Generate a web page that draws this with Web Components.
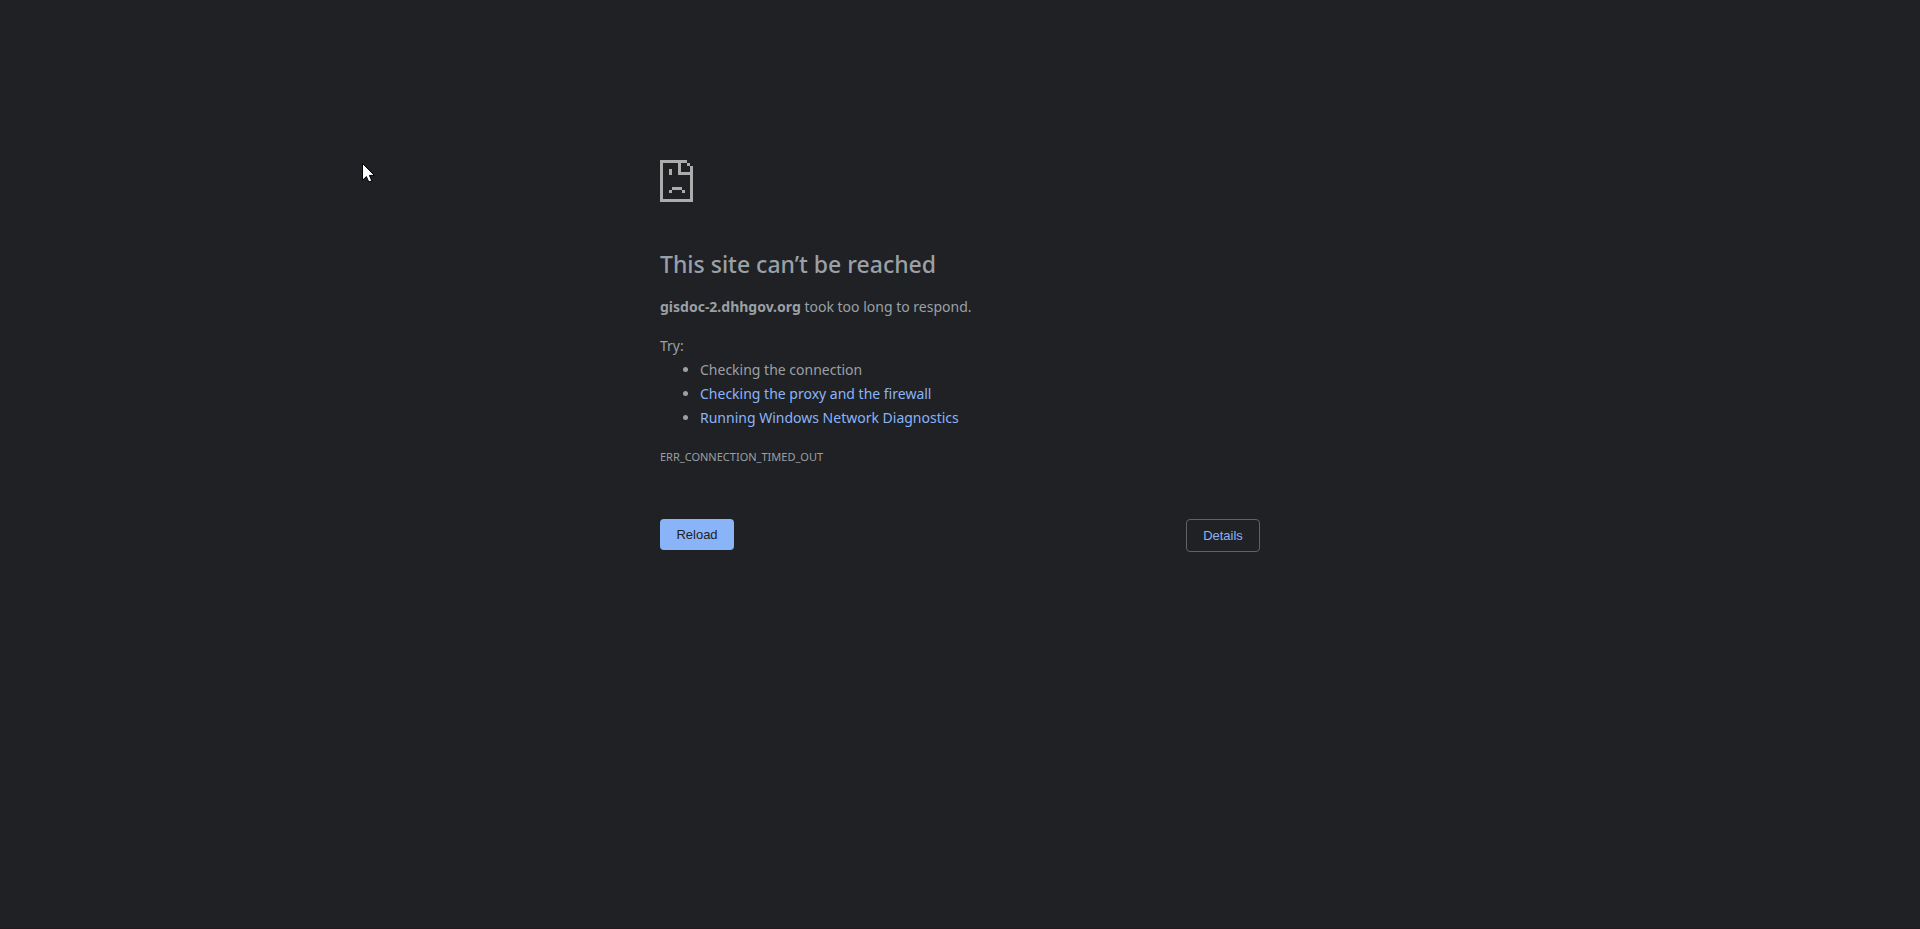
<!DOCTYPE html>
<html lang="en">
<head>
    <meta charset="utf-8">
    <meta name="viewport" content="width=device-width, initial-scale=1">
    <title>gisdoc-2.dhhgov.org</title>
    <style>
        html {
            background-color: #202124;
        }

        body {
            margin: 0;
            min-height: 100vh;
            box-sizing: border-box;
            border-bottom: 1px solid #231a1d;
            color: #9aa0a6;
            font: 14px/24px "Noto Sans", "Open Sans", sans-serif;
        }
    </style>
</head>
<body>
    <error-page></error-page>
    <mouse-pointer></mouse-pointer>

    <script>
        class SadPageIcon extends HTMLElement {
            constructor() {
                super()
                this._shadowRoot = this.attachShadow({mode: 'open'})
            }

            connectedCallback() {
                this.render()
            }

            render() {
                this._shadowRoot.innerHTML = `
                    <style>
                        :host {
                            display: block;
                        }

                        svg {
                            display: block;
                            width: 33px;
                            height: 42px;
                        }
                    </style>
                    <svg viewBox="0 0 33 42" fill="#acacac" shape-rendering="crispEdges" aria-hidden="true">
                        <path d="M0 0H27V3H21V12H33V42H0ZM3 3V39H30V15H18V3Z" fill-rule="evenodd"/>
                        <path d="M27 3h3v3h-3zM30 6h3v6h-3z"/>
                        <path d="M9 9h3v6h-3zM12 27h10v3h-10zM9 30h3v3h-3zM22 30h3v3h-3z"/>
                    </svg>
                `
            }
        }

        class PageButton extends HTMLElement {
            constructor() {
                super()
                this._shadowRoot = this.attachShadow({mode: 'open'})
            }

            connectedCallback() {
                this.render()
            }

            render() {
                this._shadowRoot.innerHTML = `
                    <style>
                        :host {
                            display: block;
                        }

                        button {
                            display: block;
                            box-sizing: border-box;
                            min-width: 74px;
                            padding: 8px 16px;
                            border: 0;
                            border-radius: 4px;
                            background-color: #8ab4f8;
                            color: #202124;
                            cursor: pointer;
                            font: 13px/15px "Liberation Sans", Arial, sans-serif;
                        }

                        :host([secondary]) button {
                            border: 1px solid #5f6368;
                            background-color: transparent;
                            color: #8ab4f8;
                        }
                    </style>
                    <button type="button"><slot></slot></button>
                `
            }
        }

        class ErrorPage extends HTMLElement {
            constructor() {
                super()
                this._shadowRoot = this.attachShadow({mode: 'open'})
            }

            connectedCallback() {
                this.render()
            }

            render() {
                this._shadowRoot.innerHTML = `
                    <style>
                        :host {
                            display: block;
                            max-width: 600px;
                            margin: 0 auto;
                            padding-top: 160px;
                        }

                        h1 {
                            margin: 47px 0 16px;
                            font-size: 23px;
                            font-weight: 500;
                            line-height: 30px;
                        }

                        p {
                            margin: 0;
                        }

                        .suggestions {
                            margin: 15px 0;
                        }

                        ul {
                            margin: 0;
                            padding-left: 40px;
                        }

                        a {
                            color: #8ab4f8;
                            text-decoration: none;
                        }

                        .error-code {
                            font-size: 11px;
                        }

                        .buttons {
                            display: flex;
                            justify-content: space-between;
                            align-items: flex-start;
                            margin-top: 50px;
                        }

                        @media screen and (max-width: 640px) {
                            :host {
                                padding: 48px 24px 0;
                            }
                        }
                    </style>
                    <sad-page-icon></sad-page-icon>
                    <h1>This site can’t be reached</h1>
                    <p><strong>gisdoc-2.dhhgov.org</strong> took too long to respond.</p>
                    <div class="suggestions">
                        <p>Try:</p>
                        <ul>
                            <li>Checking the connection</li>
                            <li><a href="#proxy">Checking the proxy and the firewall</a></li>
                            <li><a href="#diagnostics">Running Windows Network Diagnostics</a></li>
                        </ul>
                    </div>
                    <p class="error-code">ERR_CONNECTION_TIMED_OUT</p>
                    <div class="buttons">
                        <page-button>Reload</page-button>
                        <page-button secondary>Details</page-button>
                    </div>
                `
            }
        }

        class MousePointer extends HTMLElement {
            constructor() {
                super()
                this._shadowRoot = this.attachShadow({mode: 'open'})
            }

            connectedCallback() {
                this.render()
            }

            render() {
                this._shadowRoot.innerHTML = `
                    <style>
                        :host {
                            position: absolute;
                            top: 163px;
                            left: 362px;
                            pointer-events: none;
                        }

                        svg {
                            display: block;
                        }
                    </style>
                    <svg width="13" height="20" viewBox="0 0 13 20" aria-hidden="true">
                        <path d="M.5 .5V17.2L4.4 13.6L6.8 19L9.8 17.8L7.4 12.4H12.4Z" fill="#fff" stroke="#000"/>
                    </svg>
                `
            }
        }

        customElements.define('sad-page-icon', SadPageIcon)
        customElements.define('page-button', PageButton)
        customElements.define('error-page', ErrorPage)
        customElements.define('mouse-pointer', MousePointer)
    </script>
</body>
</html>
